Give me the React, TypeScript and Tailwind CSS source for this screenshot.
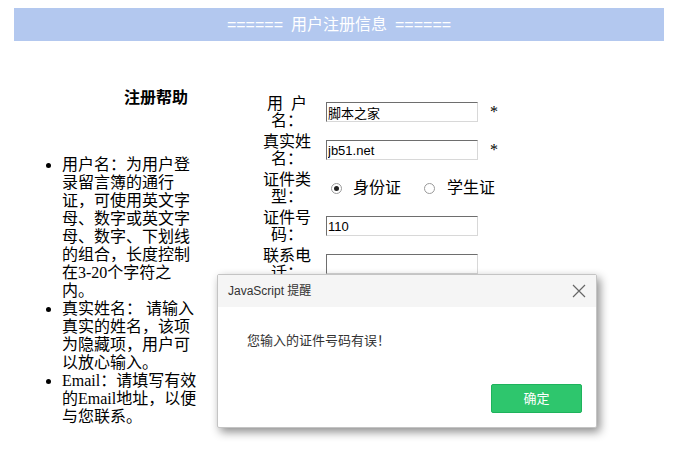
import React from 'react';

const serif = { fontFamily: '"Liberation Serif", "Noto Sans CJK SC", serif' };
const sans = { fontFamily: '"Liberation Sans", "Noto Sans CJK SC", sans-serif' };

function Field({ value }: { value?: string }) {
  return (
    <input
      readOnly
      defaultValue={value}
      className="w-[152px] h-[20px] px-[1px] text-[13px] text-black bg-white border border-t-[#6e6e6e] border-l-[#6e6e6e] border-b-[#d8d8d8] border-r-[#d8d8d8] outline-none"
      style={sans}
    />
  );
}

function Radio({ checked }: { checked?: boolean }) {
  return (
    <span className="w-[11px] h-[11px] rounded-full border border-[#9a9a9a] bg-white flex items-center justify-center">
      {checked && <span className="w-[5px] h-[5px] rounded-full bg-[#222]" />}
    </span>
  );
}

function Row({ label, children }: { label: React.ReactNode; children: React.ReactNode }) {
  return (
    <div className="h-[38px] flex items-center">
      <div className="w-[50px] text-center text-[16px] leading-[17px] text-black">{label}</div>
      <div className="ml-[14px] flex items-center">{children}</div>
    </div>
  );
}

export default function App() {
  return (
    <div className="relative w-[692px] h-[460px] bg-white overflow-hidden" style={serif}>
      <div
        className="ml-[14px] w-[650px] mt-[8px] h-[33px] bg-[#b3c8ef] flex items-center justify-center gap-[8px] text-white text-[16px]"
        style={sans}
      >
        <span>======</span>
        <span>用户注册信息</span>
        <span>======</span>
      </div>

      <div className="flex">
        <div className="w-[262px]">
          <h2 className="pl-[124px] pt-[48px] text-[16px] leading-[18px] font-bold text-black">注册帮助</h2>
          <ul className="mt-[49px] ml-[46px] pl-[16px] list-disc text-[16px] leading-[18px] text-black whitespace-nowrap">
            <li>
              用户名：为用户登<br />录留言簿的通行<br />证，可使用英文字<br />母、数字或英文字<br />母、数字、下划线<br />的组合，长度控制<br />在3-20个字符之<br />内。
            </li>
            <li>
              真实姓名： 请输入<br />真实的姓名，该项<br />为隐藏项，用户可<br />以放心输入。
            </li>
            <li>
              Email：请填写有效<br />的Email地址，以便<br />与您联系。
            </li>
          </ul>
        </div>

        <div className="pt-[52px] flex flex-col">
          <Row label={<>用&nbsp;&nbsp;户<br />名：</>}>
            <Field value="脚本之家" />
            <span className="ml-[12px] text-[16px] text-black">*</span>
          </Row>
          <Row label={<>真实姓<br />名：</>}>
            <Field value="jb51.net" />
            <span className="ml-[12px] text-[16px] text-black">*</span>
          </Row>
          <Row label={<>证件类<br />型：</>}>
            <div className="flex items-center text-[16px] text-black">
              <span className="ml-[5px]"><Radio checked /></span>
              <span className="ml-[11px]">身份证</span>
              <span className="ml-[23px]"><Radio /></span>
              <span className="ml-[12px]">学生证</span>
            </div>
          </Row>
          <Row label={<>证件号<br />码：</>}>
            <Field value="110" />
          </Row>
          <Row label={<>联系电<br />话：</>}>
            <Field />
          </Row>
        </div>
      </div>

      <div
        className="absolute left-[217px] top-[274px] w-[380px] h-[154px] bg-white border border-[#c4c4c4] rounded-[2px] shadow-[3px_4px_10px_rgba(0,0,0,0.45)] flex flex-col"
        style={sans}
      >
        <div className="h-[32px] bg-[#f5f5f5] flex items-center justify-between pl-[10px] pr-[9px]">
          <span className="text-[12px] text-[#333]">JavaScript 提醒</span>
          <svg width="16" height="16" viewBox="0 0 16 16" className="text-[#666]">
            <path d="M2 2 L14 14 M14 2 L2 14" stroke="currentColor" strokeWidth="1.2" fill="none" />
          </svg>
        </div>
        <div className="flex-1 flex flex-col px-[14px] pb-[14px]">
          <p className="pl-[15px] pt-[24px] text-[13px] text-[#333]">您输入的证件号码有误！</p>
          <div className="mt-auto flex justify-end">
            <button className="w-[91px] h-[29px] bg-[#2ec66d] border border-[#1eb35c] rounded-[2px] text-white text-[13px]">
              确定
            </button>
          </div>
        </div>
      </div>
    </div>
  );
}
